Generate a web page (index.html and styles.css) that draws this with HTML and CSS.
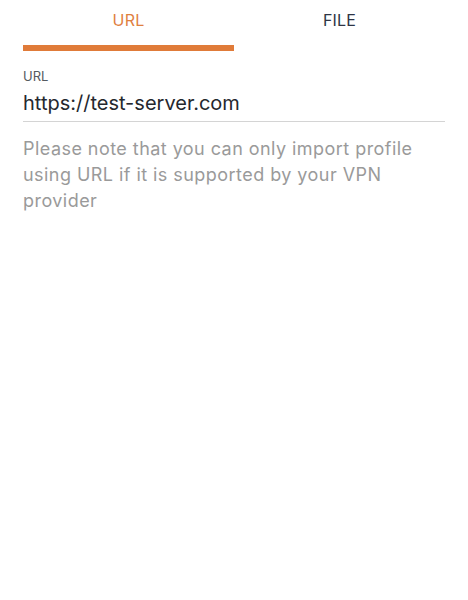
FILE: index.html
```html
<!DOCTYPE html>
<html>
<head>
<meta charset="utf-8">
<link rel="stylesheet" href="styles.css">
</head>
<body>
<div class="screen">
  <div class="tabs">
    <div class="tab active"><span class="tab-label">URL</span><span class="indicator"></span></div>
    <div class="tab"><span class="tab-label">FILE</span><span class="indicator"></span></div>
  </div>
  <div class="field">
    <div class="field-label">URL</div>
    <div class="field-value">https://test-server.com</div>
  </div>
  <p class="note">Please note that you can only import profile using URL if it is supported by your VPN provider</p>
</div>
</body>
</html>
```

FILE: styles.css
```css
html, body {
  margin: 0;
  padding: 0;
  background: #ffffff;
}
body {
  font-family: Inter, "Noto Sans", sans-serif;
  width: 468px;
  height: 600px;
}
.screen {
  padding: 0 23px;
}
.tabs {
  display: grid;
  grid-template-columns: 1fr 1fr;
}
.tab {
  display: flex;
  flex-direction: column;
  align-items: center;
}
.tab-label {
  font-size: 16px;
  line-height: 20px;
  padding-top: 10px;
  color: #2e3445;
  height: 20px;
  letter-spacing: 0.2px;
}
.tab.active .tab-label {
  color: #e0803f;
}
.indicator {
  margin-top: 15px;
  align-self: stretch;
  height: 6px;
}
.tab.active .indicator {
  background: #e07b39;
}
.field {
  padding-top: 17px;
}
.field-label {
  font-size: 13px;
  line-height: 16px;
  color: #555a60;
}
.field-value {
  font-size: 20px;
  line-height: 26px;
  padding-top: 6px;
  padding-bottom: 5px;
  color: #25282e;
  border-bottom: 1.5px solid #d4d4d4;
}
.note {
  margin: 14px 0 0;
  font-size: 18px;
  line-height: 26px;
  letter-spacing: 0.45px;
  color: #9a9a9a;
}
```
